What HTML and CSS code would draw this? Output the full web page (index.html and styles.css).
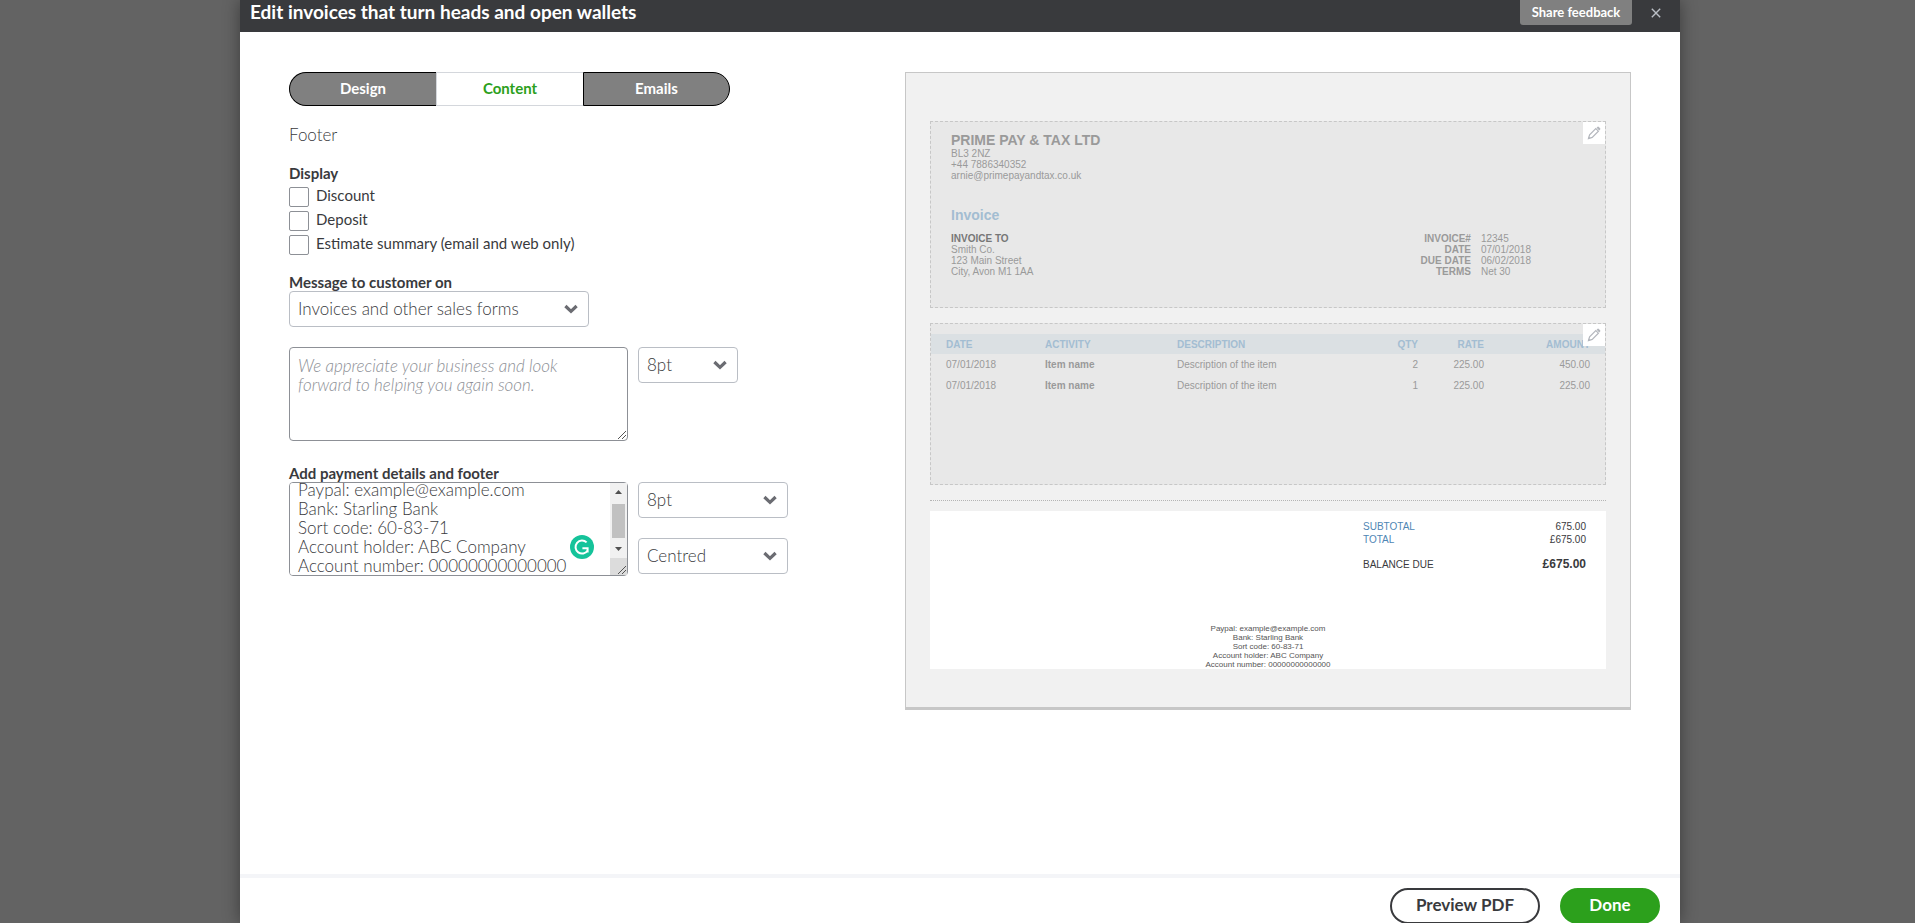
FILE: index.html
```html
<!DOCTYPE html>
<html lang="en-GB">
<head>
<meta charset="utf-8">
<title>Edit invoices</title>
<link rel="stylesheet" href="styles.css">
</head>
<body>
<svg class="sprite" aria-hidden="true">
  <symbol id="chevron" viewBox="0 0 14 10"><path d="M1.4 2 L7 7.4 L12.6 2" fill="none" stroke="#6b6c72" stroke-width="3.2"/></symbol>
  <symbol id="grip" viewBox="0 0 10 10"><path d="M1 9 L9 1 M5 9 L9 5" fill="none" stroke="#555" stroke-width="1"/></symbol>
  <symbol id="pencil" viewBox="0 0 14 14"><path d="M1.5 12.5 L2.6 8.8 L8.8 2.6 L11.4 5.2 L5.2 11.4 Z" fill="none" stroke="#b4b7bd" stroke-width="1.2"/><path d="M9.6 1.8 L10.6 .8 Q11.2 .4 11.8 .9 L13.1 2.2 Q13.6 2.8 13.2 3.4 L12.2 4.4 Z M1 13 L1.8 10.6 L3.4 12.2 Z" fill="#b4b7bd"/></symbol>
</svg>
<div class="modal" role="dialog" aria-labelledby="title">
  <header class="modal-head">
    <h1 id="title">Edit invoices that turn heads and open wallets</h1>
    <button class="feedback" type="button">Share feedback</button>
    <button class="close" type="button" aria-label="Close"><svg viewBox="0 0 10 10"><path d="M.8 .8 L9.2 9.2 M9.2 .8 L.8 9.2" fill="none" stroke="#babec5" stroke-width="1.4"/></svg></button>
  </header>
  <main class="modal-body">
    <form class="settings">
      <nav class="tabs">
        <button class="tab" type="button">Design</button>
        <button class="tab active" type="button">Content</button>
        <button class="tab" type="button">Emails</button>
      </nav>
      <h2 class="section-name">Footer</h2>
      <fieldset class="display">
        <legend>Display</legend>
        <label class="check"><input type="checkbox"><span>Discount</span></label>
        <label class="check"><input type="checkbox"><span>Deposit</span></label>
        <label class="check"><input type="checkbox"><span>Estimate summary (email and web only)</span></label>
      </fieldset>
      <label class="caption" for="form-type">Message to customer on</label>
      <div class="select wide">
        <select id="form-type"><option>Invoices and other sales forms</option></select>
        <svg class="chevron"><use href="#chevron"/></svg>
      </div>
      <div class="row message-row">
        <div class="area">
          <textarea id="message" aria-label="Message to customer" placeholder="We appreciate your business and look forward to helping you again soon."></textarea>
          <svg class="grip"><use href="#grip"/></svg>
        </div>
        <div class="select short">
          <select aria-label="Message font size"><option>8pt</option></select>
          <svg class="chevron"><use href="#chevron"/></svg>
        </div>
      </div>
      <label class="caption payment-caption" for="payment">Add payment details and footer</label>
      <div class="row">
        <div class="area">
          <textarea id="payment">Paypal: example@example.com
Bank: Starling Bank
Sort code: 60-83-71
Account holder: ABC Company
Account number: 00000000000000

</textarea>
          <svg class="scrollbar" viewBox="0 0 17 92" aria-hidden="true">
            <path d="M0 0H17V75H0Z" fill="#f1f1f1"/>
            <path d="M0 75H17V92H0Z" fill="#dcdcdc"/>
            <path d="M2 21H15V55H2Z" fill="#c1c1c1"/>
            <path d="M5 11 L8.5 7 L12 11Z M5 64 L8.5 68 L12 64Z" fill="#505050"/>
          </svg>
          <svg class="grip"><use href="#grip"/></svg>
          <svg class="checker" viewBox="0 0 24 24" aria-hidden="true">
            <circle cx="12" cy="12" r="12" fill="#15c39a"/>
            <path d="M16.6 7.4 A6.5 6.5 0 1 0 17.6 15.4 M12.4 13.2 H17.6 V17.6" fill="none" stroke="#fff" stroke-width="2"/>
          </svg>
        </div>
        <div class="stack">
          <div class="select medium">
            <select aria-label="Footer font size"><option>8pt</option></select>
            <svg class="chevron"><use href="#chevron"/></svg>
          </div>
          <div class="select medium">
            <select aria-label="Footer alignment"><option>Centred</option></select>
            <svg class="chevron"><use href="#chevron"/></svg>
          </div>
        </div>
      </div>
    </form>
    <section class="preview" aria-label="Invoice preview">
      <div class="block letterhead">
        <button class="edit" type="button" aria-label="Edit header"><svg><use href="#pencil"/></svg></button>
        <h3>PRIME PAY &amp; TAX LTD</h3>
        <p>BL3 2NZ<br>+44 7886340352<br>arnie@primepayandtax.co.uk</p>
        <h4>Invoice</h4>
        <div class="parties">
          <p><b>INVOICE TO</b><br>Smith Co.<br>123 Main Street<br>City, Avon M1 1AA</p>
          <dl class="facts">
            <dt>INVOICE#</dt><dd>12345</dd>
            <dt>DATE</dt><dd>07/01/2018</dd>
            <dt>DUE DATE</dt><dd>06/02/2018</dd>
            <dt>TERMS</dt><dd>Net 30</dd>
          </dl>
        </div>
      </div>
      <div class="block items">
        <button class="edit" type="button" aria-label="Edit items"><svg><use href="#pencil"/></svg></button>
        <table>
          <colgroup><col class="c-date"><col class="c-activity"><col><col class="c-qty"><col class="c-rate"><col class="c-amount"></colgroup>
          <thead><tr><th>DATE</th><th>ACTIVITY</th><th>DESCRIPTION</th><th class="num">QTY</th><th class="num">RATE</th><th class="num">AMOUNT</th></tr></thead>
          <tbody>
            <tr><td>07/01/2018</td><td><b>Item name</b></td><td>Description of the item</td><td class="num">2</td><td class="num">225.00</td><td class="num">450.00</td></tr>
            <tr><td>07/01/2018</td><td><b>Item name</b></td><td>Description of the item</td><td class="num">1</td><td class="num">225.00</td><td class="num">225.00</td></tr>
          </tbody>
        </table>
      </div>
      <div class="totals">
        <dl>
          <dt>SUBTOTAL</dt><dd>675.00</dd>
          <dt>TOTAL</dt><dd>£675.00</dd>
          <dt class="due">BALANCE DUE</dt><dd class="due">£675.00</dd>
        </dl>
        <p>Paypal: example@example.com<br>Bank: Starling Bank<br>Sort code: 60-83-71<br>Account holder: ABC Company<br>Account number: 00000000000000</p>
      </div>
    </section>
  </main>
  <footer class="modal-foot">
    <button class="pill" type="button">Preview PDF</button>
    <button class="pill primary" type="button">Done</button>
  </footer>
</div>
<script>document.getElementById('payment').scrollTop = 11;</script>
</body>
</html>
```

FILE: styles.css
```css
* { box-sizing: border-box; }
body { margin: 0; background: #636363; color: #393a3d; font-family: Lato, sans-serif; overflow: hidden; }
h1, h2, h3, h4, p, dl, dd { margin: 0; }
button, select, textarea { font-family: inherit; }
.sprite { display: none; }

.modal { display: flex; flex-direction: column; height: 100vh; margin: 0 235px 0 240px; background: #fff; box-shadow: 0 0 16px rgba(0, 0, 0, .4); }
.modal-head { display: flex; align-items: flex-start; height: 32px; padding-left: 10px; background: #393a3d; color: #fff; }
.modal-head h1 { flex: 1; font-size: 19px; line-height: 23px; font-weight: 700; }
.feedback { width: 112px; height: 25px; padding: 0 0 2px; border: 0; border-radius: 0 0 3px 3px; background: #808080; color: #fff; font-size: 13px; font-weight: 700; }
.close { width: 48px; height: 25px; padding: 0; border: 0; background: none; }
.close svg { display: block; width: 10px; height: 10px; margin: 0 auto; }

.modal-body { flex: 1; min-height: 0; display: grid; grid-template-columns: 616fr 726fr; align-items: start; padding: 40px 49px 0; }
.tabs { display: flex; width: 441px; }
.tab { flex: 0 0 calc(100% / 3); height: 34px; padding: 0 0 3px; border: 1px solid #000; background: #808080; color: #fff; font-size: 15px; font-weight: 700; }
.tab:first-child { border-right: 0; border-radius: 17px 0 0 17px; }
.tab:last-child { border-radius: 0 17px 17px 0; }
.tab.active { border-color: #d4d7dc; border-right: 0; background: #fff; color: #2ca01c; }
.section-name { margin-top: 19px; font-size: 17px; line-height: 20px; font-weight: 300; }
.display { margin: 19px 0 0; padding: 0; border: 0; }
.display legend, .caption { padding: 0; font-size: 15px; line-height: 18px; font-weight: 700; }
.check { display: flex; gap: 7px; height: 24px; font-size: 15px; line-height: 17px; }
.check:first-of-type { margin-top: 5px; }
.check input { appearance: none; width: 20px; height: 20px; margin: 0; border: 1px solid #8d9096; border-radius: 2px; background: #fff; }
.caption { display: block; margin-top: 14px; }
.select { display: grid; align-items: center; }
.select select, .select .chevron { grid-area: 1 / 1; }
.select select { appearance: none; width: 100%; height: 36px; padding: 0 8px 2px; border: 1px solid #babec5; border-radius: 4px; background: #fff; color: #393a3d; font-size: 17px; font-weight: 300; }
.chevron { justify-self: end; width: 14px; height: 10px; margin-right: 11px; pointer-events: none; }
.wide { width: 300px; }
.short { width: 100px; }
.medium { width: 150px; }
.row { display: flex; align-items: flex-start; gap: 10px; }
.message-row { margin-top: 20px; }
.payment-caption { margin-top: 23px; }
.stack { display: grid; gap: 20px; }
.area { position: relative; width: 339px; }
.area textarea { display: block; width: 100%; height: 94px; padding: 8px 30px 8px 8px; border: 1px solid #8d9096; border-radius: 4px; background: #fff; color: #393a3d; font-size: 17px; line-height: 19px; font-weight: 300; resize: none; scrollbar-width: none; }
.area textarea::placeholder { color: #8d9096; font-style: italic; }
.grip { position: absolute; right: 1px; bottom: 1px; width: 10px; height: 10px; }
.scrollbar { position: absolute; top: 1px; right: 1px; width: 17px; height: 92px; }
.checker { position: absolute; right: 34px; bottom: 17px; width: 24px; height: 24px; }

.preview { padding: 48px 24px 38px; border: 1px solid #c7c7c7; border-bottom-width: 3px; background: #f1f1f1; font-family: "Liberation Sans", Arial, sans-serif; font-size: 10px; line-height: 11px; }
.block { position: relative; border: 1px dashed #c7c7c7; background: #e8e8e8; color: #9a9a9a; }
.edit { position: absolute; top: 0; right: 0; display: grid; place-items: center; width: 22px; height: 22px; padding: 0; border: 0; background: #fff; }
.edit svg { width: 14px; height: 14px; }
.letterhead { height: 187px; padding: 10px 20px; }
.letterhead h3 { font-size: 14px; line-height: 16px; }
.letterhead h4 { margin-top: 26px; font-size: 14px; line-height: 16px; color: #a3bdd2; }
.parties { display: flex; justify-content: space-between; margin-top: 10px; }
.parties p b { color: #777; }
.facts { display: grid; grid-template-columns: auto auto; gap: 0 10px; align-content: start; padding-right: 54px; }
.facts dt { font-weight: 700; text-align: right; }
.items { height: 162px; margin-top: 15px; padding-top: 10px; }
.items table { width: 100%; border-collapse: collapse; table-layout: fixed; }
.items th, .items td { height: 21px; padding: 0 0 0 15px; text-align: left; font-weight: 400; }
.items th { height: 20px; background: #dbe0e3; color: #a3bdd2; font-weight: 700; }
.items .num { padding: 0 15px 0 0; text-align: right; }
.c-date { width: 99px; }
.c-activity { width: 132px; }
.c-qty { width: 60px; }
.c-rate { width: 66px; }
.c-amount { width: 106px; }
.totals { margin-top: 15px; border-top: 1px dotted #b4b4b4; padding-top: 10px; }
.totals dl { display: grid; grid-template-columns: 100px 123px; justify-content: end; padding: 9px 20px 0 0; background: #fff; line-height: 13px; }
.totals dt { color: #4f86b4; }
.totals dd { text-align: right; }
.totals .due { margin-top: 12px; color: #393a3d; }
.totals dd.due { font-size: 12px; font-weight: 700; }
.totals p { padding-top: 53px; background: #fff; color: #555; font-size: 8px; line-height: 9px; text-align: center; }

.modal-foot { display: flex; justify-content: flex-end; gap: 20px; height: 49px; padding: 10px 20px 0; border-top: 4px solid #f4f5f8; }
.pill { width: 150px; height: 36px; padding: 0 0 3px; border: 2px solid #393a3d; border-radius: 18px; background: #fff; color: #393a3d; font-size: 17px; font-weight: 700; }
.pill.primary { width: 100px; border-color: #2ca01c; background: #2ca01c; color: #fff; }
```
